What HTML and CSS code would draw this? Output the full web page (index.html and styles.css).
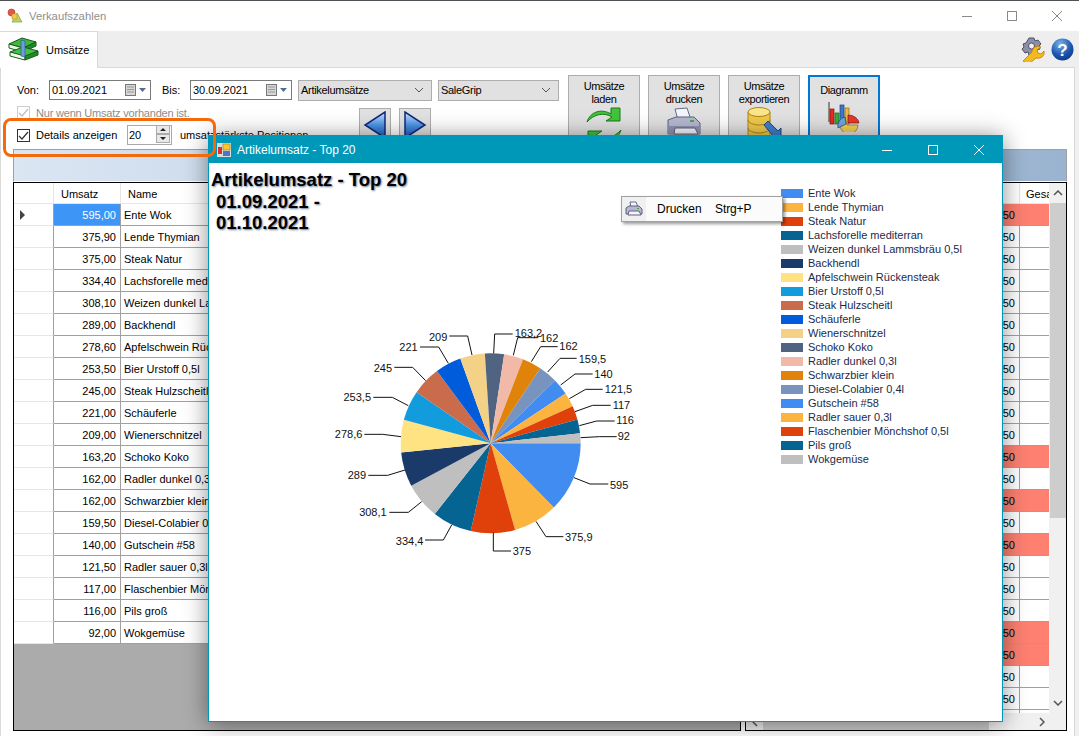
FILE: index.html
```html
<!DOCTYPE html>
<html lang="de">
<head>
<meta charset="utf-8">
<title>Verkaufszahlen</title>
<link rel="stylesheet" href="styles.css">
</head>
<body>
<div class="app">
  <header class="titlebar">
    <svg class="title-icon" width="16" height="16" viewBox="0 0 16 16"><circle cx="4.5" cy="4.5" r="3.5" fill="#e0584c" stroke="#a8352c" stroke-width=".6"/><path d="M10 5l5 9H5z" fill="#b6d86a" stroke="#7f9c3e" stroke-width=".7"/><rect x="5" y="6" width="5" height="5" fill="#f2c94f" stroke="#b99526" stroke-width=".6"/></svg>
    <span class="title-text">Verkaufszahlen</span>
    <div class="win-controls muted">
      <svg width="12" height="12" viewBox="0 0 12 12"><path d="M1 6.5h10" stroke="#8a8a8a"/></svg>
      <svg width="12" height="12" viewBox="0 0 12 12"><rect x="1.5" y="1.5" width="9" height="9" fill="none" stroke="#8a8a8a"/></svg>
      <svg width="12" height="12" viewBox="0 0 12 12"><path d="M1 1l10 10M11 1L1 11" stroke="#8a8a8a"/></svg>
    </div>
  </header>

  <nav class="tabstrip">
    <div class="tab">
      <svg class="tab-icon" width="32" height="25" viewBox="0 0 32 25"><path d="M1 8l13-6 14 4-13 6z" fill="#3fb83c" stroke="#14601a"/><path d="M1 8v4l14 4V12z" fill="#eef7ea" stroke="#14601a"/><path d="M15 12v4l13-6V6z" fill="#1f8a27" stroke="#14601a"/><path d="M2 16l13-5 15 4-13 6z" fill="#46c243" stroke="#14601a"/><path d="M2 16v4l15 4v-4z" fill="#f3f9ef" stroke="#14601a"/><path d="M17 20v4l13-5v-4z" fill="#1f8a27" stroke="#14601a"/><path d="M13 4l4 1v16l-4-1z" fill="#6f9bd8" stroke="#2c5aa0" stroke-width=".7"/></svg>
      <span>Umsätze</span>
    </div>
    <div class="tab-tools">
      <svg width="25" height="25" viewBox="0 0 25 25"><path d="M9 1h5l1 3 3-1 3 4-2 2 1 3-3 1-3 5H9l-1-3-3 1-3-4 2-2-1-3 3-1z" fill="#8d8ea8" stroke="#4f5068"/><circle cx="11.500" cy="9" r="3" fill="#f0f0f0" stroke="#4f5068"/><path d="M3 24l9-9c0-4 4-7 9-5l-4 3 1 3 3 1 3-3c1 5-3 8-8 7l-7 6z" fill="#f6b91c" stroke="#b77e08" stroke-width=".8"/></svg>
      <svg width="23" height="23" viewBox="0 0 23 23"><defs><radialGradient id="helpg" cx=".4" cy=".25" r=".9"><stop offset="0" stop-color="#7db0ea"/><stop offset=".55" stop-color="#1c56b0"/><stop offset="1" stop-color="#0c2f78"/></radialGradient></defs><circle cx="11.500" cy="11.500" r="11" fill="url(#helpg)"/><text class="help-mark" x="11.500" y="18">?</text></svg>
    </div>
  </nav>

  <main class="page">
    <section class="toolbar">
      <div class="filters">
        <div class="filter-row">
          <label class="lbl-von">Von:</label>
          <div class="datebox"><span>01.09.2021</span><svg width="26" height="14" viewBox="0 0 26 14"><rect x="1.500" y="1.500" width="10" height="11" fill="#d6d6d6" stroke="#777"/><path d="M3 4h7M3 6.500h7M3 9h7" stroke="#999"/><path d="M15 5h7l-3.500 4z" fill="#4f6d96"/></svg></div>
          <label class="lbl-bis">Bis:</label>
          <div class="datebox"><span>30.09.2021</span><svg width="26" height="14" viewBox="0 0 26 14"><rect x="1.500" y="1.500" width="10" height="11" fill="#d6d6d6" stroke="#777"/><path d="M3 4h7M3 6.500h7M3 9h7" stroke="#999"/><path d="M15 5h7l-3.500 4z" fill="#4f6d96"/></svg></div>
          <div class="combo combo-a"><span>Artikelumsätze</span><svg width="10" height="6" viewBox="0 0 10 6"><path d="M1 1l4 4 4-4" fill="none" stroke="#555"/></svg></div>
          <div class="combo combo-b"><span>SaleGrip</span><svg width="10" height="6" viewBox="0 0 10 6"><path d="M1 1l4 4 4-4" fill="none" stroke="#555"/></svg></div>
        </div>
        <div class="filter-lower">
          <div class="checks">
            <div class="check-row disabled">
              <span class="checkbox"><svg width="11" height="11" viewBox="0 0 11 11"><path d="M1 6l3 3 6-7" fill="none" stroke="#bdbdbd" stroke-width="1.200"/></svg></span>
              <span>Nur wenn Umsatz vorhanden ist.</span>
            </div>
            <div class="check-row details">
              <span class="checkbox on"><svg width="11" height="11" viewBox="0 0 11 11"><path d="M1 6l3 3 6-7" fill="none" stroke="#333" stroke-width="1.200"/></svg></span>
              <span class="details-label">Details anzeigen</span>
              <div class="spinner"><span class="spin-val">20</span><span class="spin-btns"><svg width="14" height="18" viewBox="0 0 14 18"><rect x=".5" y=".5" width="13" height="8" fill="#e8e8e8" stroke="#ababab"/><rect x=".5" y="9.500" width="13" height="8" fill="#e8e8e8" stroke="#ababab"/><path d="M4 6l3-3 3 3zM4 12h6l-3 3z" fill="#222"/></svg></span></div>
              <span class="details-after">umsatzstärkste Positionen</span>
            </div>
          </div>
          <div class="arrows">
            <button class="arrow-btn"><svg width="24" height="28" viewBox="0 0 24 28"><defs><linearGradient id="ag" x1="0" y1="0" x2="0" y2="1"><stop offset="0" stop-color="#cfe4fb"/><stop offset=".5" stop-color="#4c94e6"/><stop offset="1" stop-color="#1b57b4"/></linearGradient></defs><path d="M22 1v26L2 14z" fill="url(#ag)" stroke="#10277c" stroke-width="1.500"/></svg></button>
            <button class="arrow-btn"><svg width="24" height="28" viewBox="0 0 24 28"><path d="M2 1v26l20-13z" fill="url(#ag)" stroke="#10277c" stroke-width="1.500"/></svg></button>
          </div>
        </div>
      </div>
      <div class="actions">
        <button class="action"><span>Umsätze<br>laden</span>
          <svg width="40" height="42" viewBox="0 0 40 42"><path d="M3 16C6 6 17 2 27 8V2l9 0v13H22l6-4c-8-5-18-3-25 5z" fill="#43c43a" stroke="#197a18"/><path d="M37 24c-3 10-14 14-24 8v6H4V25h14l-6 4c8 5 18 3 25-5z" fill="#43c43a" stroke="#197a18"/></svg>
        </button>
        <button class="action"><span>Umsätze<br>drucken</span>
          <svg width="36" height="36" viewBox="0 0 36 36"><path d="M9 3l12-1 4 12H12z" fill="#f4f6fb" stroke="#666a86"/><path d="M2 14l8-3h18l6 6v11H2z" fill="#b5b8d0" stroke="#5e6182"/><path d="M2 20h32v8H2z" fill="#8f93b0"/><path d="M9 22h20l3 6H8z" fill="#f5f6fb" stroke="#5e6182"/><rect x="24" y="14" width="4" height="2" fill="#40b040"/></svg>
        </button>
        <button class="action"><span>Umsätze<br>exportieren</span>
          <svg width="36" height="36" viewBox="0 0 36 36"><path d="M2 6v22c0 3 6 5 11 5s11-2 11-5V6z" fill="#f0c84a" stroke="#a88518"/><ellipse cx="13" cy="6" rx="11" ry="4.500" fill="#fbe78a" stroke="#a88518"/><path d="M2 14c0 3 6 5 11 5s11-2 11-5M2 22c0 3 6 5 11 5s11-2 11-5" fill="none" stroke="#a88518"/><path d="M18 19l4-4 10 10 3-3v11H24l3-3z" fill="#3f7fcc" stroke="#1d4a8a"/></svg>
        </button>
        <button class="action active"><span class="single">Diagramm</span>
          <svg width="32" height="32" viewBox="0 0 32 32"><path d="M1 2v20" stroke="#333"/><rect x="2" y="9" width="4" height="15" fill="#e92b20" stroke="#7d1510" stroke-width=".7"/><rect x="7" y="13" width="4" height="11" fill="#3cab3a" stroke="#1a651a" stroke-width=".7"/><rect x="12" y="5" width="4" height="19" fill="#3b79cf" stroke="#1c417d" stroke-width=".7"/><rect x="17" y="8" width="4" height="16" fill="#efb93f" stroke="#8d6a12" stroke-width=".7"/><path d="M20 15a11 9 0 0 1 11 8h-11z" fill="#e8382c" stroke="#7d1510" stroke-width=".7"/><path d="M17 17a9 9 0 1 0 13 8H19z" fill="#f3cf55" stroke="#8d6a12" stroke-width=".7"/><path d="M17 17a9 9 0 0 0-7 11l8-4z" fill="#6fa5e0" stroke="#1c417d" stroke-width=".7"/></svg>
        </button>
      </div>
    </section>

    <div class="band"></div>

    <section class="grids">
      <div class="grid-left">
        <table class="tbl">
          <colgroup><col class="c-head"><col class="c-umsatz"><col></colgroup>
          <thead><tr><th></th><th class="th-u">Umsatz</th><th class="th-n">Name</th></tr></thead>
          <tbody>
            <tr><td class="rh"><i class="pointer"></i></td><td class="num sel">595,00</td><td>Ente Wok</td></tr>
            <tr><td class="rh"></td><td class="num">375,90</td><td>Lende Thymian</td></tr>
            <tr><td class="rh"></td><td class="num">375,00</td><td>Steak Natur</td></tr>
            <tr><td class="rh"></td><td class="num">334,40</td><td>Lachsforelle mediterran</td></tr>
            <tr><td class="rh"></td><td class="num">308,10</td><td>Weizen dunkel Lammsbräu 0,5l</td></tr>
            <tr><td class="rh"></td><td class="num">289,00</td><td>Backhendl</td></tr>
            <tr><td class="rh"></td><td class="num">278,60</td><td>Apfelschwein Rückensteak</td></tr>
            <tr><td class="rh"></td><td class="num">253,50</td><td>Bier Urstoff 0,5l</td></tr>
            <tr><td class="rh"></td><td class="num">245,00</td><td>Steak Hulzscheitl</td></tr>
            <tr><td class="rh"></td><td class="num">221,00</td><td>Schäuferle</td></tr>
            <tr><td class="rh"></td><td class="num">209,00</td><td>Wienerschnitzel</td></tr>
            <tr><td class="rh"></td><td class="num">163,20</td><td>Schoko Koko</td></tr>
            <tr><td class="rh"></td><td class="num">162,00</td><td>Radler dunkel 0,3l</td></tr>
            <tr><td class="rh"></td><td class="num">162,00</td><td>Schwarzbier klein</td></tr>
            <tr><td class="rh"></td><td class="num">159,50</td><td>Diesel-Colabier 0,4l</td></tr>
            <tr><td class="rh"></td><td class="num">140,00</td><td>Gutschein #58</td></tr>
            <tr><td class="rh"></td><td class="num">121,50</td><td>Radler sauer 0,3l</td></tr>
            <tr><td class="rh"></td><td class="num">117,00</td><td>Flaschenbier Mönchshof 0,5l</td></tr>
            <tr><td class="rh"></td><td class="num">116,00</td><td>Pils groß</td></tr>
            <tr><td class="rh"></td><td class="num">92,00</td><td>Wokgemüse</td></tr>
          </tbody>
        </table>
      </div>
      <div class="grid-right">
        <div class="right-top">
          <div class="right-cells">
            <table class="tbl tbl-right">
              <colgroup><col><col class="c-val"><col class="c-ges"></colgroup>
              <thead><tr><th></th><th></th><th class="th-ges"><span class="clip">Gesamt</span></th></tr></thead>
              <tbody>
                <tr class="red"><td></td><td class="num">0,50</td><td></td></tr>
                <tr><td></td><td class="num">0,50</td><td></td></tr>
                <tr><td></td><td class="num">0,50</td><td></td></tr>
                <tr><td></td><td class="num">0,50</td><td></td></tr>
                <tr><td></td><td class="num">0,50</td><td></td></tr>
                <tr><td></td><td class="num">0,50</td><td></td></tr>
                <tr><td></td><td class="num">0,50</td><td></td></tr>
                <tr><td></td><td class="num">0,50</td><td></td></tr>
                <tr><td></td><td class="num">0,50</td><td></td></tr>
                <tr><td></td><td class="num">0,50</td><td></td></tr>
                <tr><td></td><td class="num">0,50</td><td></td></tr>
                <tr class="red"><td></td><td class="num">0,50</td><td></td></tr>
                <tr><td></td><td class="num">0,50</td><td></td></tr>
                <tr class="red"><td></td><td class="num">0,50</td><td></td></tr>
                <tr><td></td><td class="num">0,50</td><td></td></tr>
                <tr class="red"><td></td><td class="num">0,50</td><td></td></tr>
                <tr><td></td><td class="num">0,50</td><td></td></tr>
                <tr><td></td><td class="num">0,50</td><td></td></tr>
                <tr><td></td><td class="num">0,50</td><td></td></tr>
                <tr class="red"><td></td><td class="num">0,50</td><td></td></tr>
                <tr class="red"><td></td><td class="num">0,50</td><td></td></tr>
                <tr><td></td><td class="num">0,50</td><td></td></tr>
                <tr><td></td><td class="num">0,50</td><td></td></tr>
                <tr><td></td><td></td><td></td></tr>
              </tbody>
            </table>
          </div>
          <div class="vscroll">
            <div class="sb-btn"><svg width="10" height="6" viewBox="0 0 10 6"><path d="M1 5l4-4 4 4" fill="none" stroke="#555" stroke-width="1.500"/></svg></div>
            <div class="v-thumb"></div>
            <div class="v-track"></div>
            <div class="sb-btn"><svg width="10" height="6" viewBox="0 0 10 6"><path d="M1 1l4 4 4-4" fill="none" stroke="#555" stroke-width="1.500"/></svg></div>
          </div>
        </div>
        <div class="hscroll">
          <svg width="6" height="10" viewBox="0 0 6 10"><path d="M5 1L1 5l4 4" fill="none" stroke="#555" stroke-width="1.500"/></svg>
          <div class="h-thumb"></div>
          <svg width="6" height="10" viewBox="0 0 6 10"><path d="M1 1l4 4-4 4" fill="none" stroke="#555" stroke-width="1.500"/></svg>
        </div>
      </div>
    </section>
  </main>

  <div class="annotation"></div>

  <article class="chart-win">
    <div class="chart-title">
      <svg width="14" height="14" viewBox="0 0 14 14"><rect width="14" height="14" fill="#dcdcdc"/><rect x="6" y="1" width="7" height="6" fill="#f6c72f" stroke="#a47f10" stroke-width=".6"/><rect x="1" y="4" width="4" height="7" fill="#d8352a"/><rect x="6" y="8" width="7" height="5" fill="#4877c8"/></svg>
      <span class="chart-name">Artikelumsatz - Top 20</span>
      <div class="win-controls light">
        <svg width="12" height="12" viewBox="0 0 12 12"><path d="M1 6.500h10" stroke="#fff"/></svg>
        <svg width="12" height="12" viewBox="0 0 12 12"><rect x="1.500" y="1.500" width="9" height="9" fill="none" stroke="#fff"/></svg>
        <svg width="12" height="12" viewBox="0 0 12 12"><path d="M1 1l10 10M11 1L1 11" stroke="#fff"/></svg>
      </div>
    </div>
    <div class="chart-body">
      <h1 class="chart-heading">Artikelumsatz - Top 20<span class="sub">01.09.2021 -<br>01.10.2021</span></h1>
      <svg class="pie" width="320" height="250" viewBox="0 0 960 750">
        <g class="slices">
          <circle class="s1" cx="512" cy="400" r="135" pathLength="4717.7" stroke-dasharray="595 4717.7" stroke-dashoffset="0"/>
          <circle class="s2" cx="512" cy="400" r="135" pathLength="4717.7" stroke-dasharray="375.9 4717.7" stroke-dashoffset="-595"/>
          <circle class="s3" cx="512" cy="400" r="135" pathLength="4717.7" stroke-dasharray="375 4717.7" stroke-dashoffset="-970.9"/>
          <circle class="s4" cx="512" cy="400" r="135" pathLength="4717.7" stroke-dasharray="334.4 4717.7" stroke-dashoffset="-1345.9"/>
          <circle class="s5" cx="512" cy="400" r="135" pathLength="4717.7" stroke-dasharray="308.1 4717.7" stroke-dashoffset="-1680.3"/>
          <circle class="s6" cx="512" cy="400" r="135" pathLength="4717.7" stroke-dasharray="289 4717.7" stroke-dashoffset="-1988.4"/>
          <circle class="s7" cx="512" cy="400" r="135" pathLength="4717.7" stroke-dasharray="278.6 4717.7" stroke-dashoffset="-2277.4"/>
          <circle class="s8" cx="512" cy="400" r="135" pathLength="4717.7" stroke-dasharray="253.5 4717.7" stroke-dashoffset="-2556"/>
          <circle class="s9" cx="512" cy="400" r="135" pathLength="4717.7" stroke-dasharray="245 4717.7" stroke-dashoffset="-2809.5"/>
          <circle class="s10" cx="512" cy="400" r="135" pathLength="4717.7" stroke-dasharray="221 4717.7" stroke-dashoffset="-3054.5"/>
          <circle class="s11" cx="512" cy="400" r="135" pathLength="4717.7" stroke-dasharray="209 4717.7" stroke-dashoffset="-3275.5"/>
          <circle class="s12" cx="512" cy="400" r="135" pathLength="4717.7" stroke-dasharray="163.2 4717.7" stroke-dashoffset="-3484.5"/>
          <circle class="s13" cx="512" cy="400" r="135" pathLength="4717.7" stroke-dasharray="162 4717.7" stroke-dashoffset="-3647.7"/>
          <circle class="s14" cx="512" cy="400" r="135" pathLength="4717.7" stroke-dasharray="162 4717.7" stroke-dashoffset="-3809.7"/>
          <circle class="s15" cx="512" cy="400" r="135" pathLength="4717.7" stroke-dasharray="159.5 4717.7" stroke-dashoffset="-3971.7"/>
          <circle class="s1" cx="512" cy="400" r="135" pathLength="4717.7" stroke-dasharray="140 4717.7" stroke-dashoffset="-4131.2"/>
          <circle class="s2" cx="512" cy="400" r="135" pathLength="4717.7" stroke-dasharray="121.5 4717.7" stroke-dashoffset="-4271.2"/>
          <circle class="s3" cx="512" cy="400" r="135" pathLength="4717.7" stroke-dasharray="117 4717.7" stroke-dashoffset="-4392.7"/>
          <circle class="s4" cx="512" cy="400" r="135" pathLength="4717.7" stroke-dasharray="116 4717.7" stroke-dashoffset="-4509.7"/>
          <circle class="s5" cx="512" cy="400" r="135" pathLength="4717.7" stroke-dasharray="92 4717.7" stroke-dashoffset="-4625.7"/>
        </g>
        <g class="leaders">
          <polyline points="762,503 810,522 865,522"/>
          <polyline points="648,634 678,680 730,680"/>
          <polyline points="520,668 520,723 573,723"/>
          <polyline points="395,645 370,690 315,690"/>
          <polyline points="305,575 265,607 208,607"/>
          <polyline points="255,480 203,496 145,496"/>
          <polyline points="243,380 188,373 133,373"/>
          <polyline points="265,287 217,262 160,262"/>
          <polyline points="317,212 278,172 223,172"/>
          <polyline points="385,160 356,111 300,111"/>
          <polyline points="456,135 443,78 388,78"/>
          <polyline points="521,130 524,72 578,72"/>
          <polyline points="580,136 593,83 655,83"/>
          <polyline points="634,155 662,110 713,110"/>
          <polyline points="683,186 720,145 770,145"/>
          <polyline points="722,225 765,192 818,192"/>
          <polyline points="748,266 797,238 848,238"/>
          <polyline points="765,305 818,286 872,286"/>
          <polyline points="778,347 830,333 884,333"/>
          <polyline points="782,383 838,380 890,380"/>
        </g>
        <g class="labels">
          <text x="870" y="524">595</text>
          <text x="735" y="680">375,9</text>
          <text x="578" y="723">375</text>
          <text class="end" x="310" y="692">334,4</text>
          <text class="end" x="200" y="607">308,1</text>
          <text class="end" x="138" y="494">289</text>
          <text class="end" x="127" y="372">278,6</text>
          <text class="end" x="153" y="261">253,5</text>
          <text class="end" x="216" y="173">245</text>
          <text class="end" x="293" y="111">221</text>
          <text class="end" x="382" y="80">209</text>
          <text x="584" y="70">163,2</text>
          <text x="660" y="83">162</text>
          <text x="718" y="107">162</text>
          <text x="776" y="146">159,5</text>
          <text x="823" y="191">140</text>
          <text x="854" y="236">121,5</text>
          <text x="878" y="284">117</text>
          <text x="889" y="331">116</text>
          <text x="893" y="377">92</text>
        </g>
      </svg>
      <ul class="legend">
        <li><i class="k1"></i>Ente Wok</li>
        <li><i class="k2"></i>Lende Thymian</li>
        <li><i class="k3"></i>Steak Natur</li>
        <li><i class="k4"></i>Lachsforelle mediterran</li>
        <li><i class="k5"></i>Weizen dunkel Lammsbräu 0,5l</li>
        <li><i class="k6"></i>Backhendl</li>
        <li><i class="k7"></i>Apfelschwein Rückensteak</li>
        <li><i class="k8"></i>Bier Urstoff 0,5l</li>
        <li><i class="k9"></i>Steak Hulzscheitl</li>
        <li><i class="k10"></i>Schäuferle</li>
        <li><i class="k11"></i>Wienerschnitzel</li>
        <li><i class="k12"></i>Schoko Koko</li>
        <li><i class="k13"></i>Radler dunkel 0,3l</li>
        <li><i class="k14"></i>Schwarzbier klein</li>
        <li><i class="k15"></i>Diesel-Colabier 0,4l</li>
        <li><i class="k1"></i>Gutschein #58</li>
        <li><i class="k2"></i>Radler sauer 0,3l</li>
        <li><i class="k3"></i>Flaschenbier Mönchshof 0,5l</li>
        <li><i class="k4"></i>Pils groß</li>
        <li><i class="k5"></i>Wokgemüse</li>
      </ul>
      <div class="ctx-menu">
        <span class="ctx-icon"><svg width="18" height="16" viewBox="0 0 18 16"><path d="M5 1l6 0 2 5H6z" fill="#f4f6fb" stroke="#666a86"/><path d="M1 7l3-2h10l3 3v5H1z" fill="#b5b8d0" stroke="#5e6182"/><path d="M4 10h10l2 4H3z" fill="#f5f6fb" stroke="#5e6182"/><rect x="12" y="7" width="2" height="1" fill="#40b040"/></svg></span>
        <span class="ctx-label">Drucken</span>
        <span class="ctx-key">Strg+P</span>
      </div>
    </div>
  </article>
</div>
</body>
</html>
```
FILE: styles.css
```css
* { box-sizing: border-box; }
html, body { margin: 0; padding: 0; }
body { font-family: "Liberation Sans", Arial, sans-serif; font-size: 11px; color: #000; background: #f0f0f0; }
.app { position: relative; width: 1079px; height: 736px; overflow: hidden; display: flex; flex-direction: column; background: #f0f0f0; }

.titlebar { height: 31px; flex: none; background: #fff; border-top: 1px solid #4d5257; display: flex; align-items: center; padding-left: 7px; }
.title-icon { margin-right: 6px; }
.title-text { color: #8f8f8f; font-size: 11.300px; }
.win-controls { margin-left: auto; display: flex; }
.win-controls.muted { gap: 33px; padding-right: 16px; }
.win-controls.light { gap: 34px; padding-right: 17px; }

.tabstrip { height: 37px; flex: none; display: flex; background: #eeeeee; }
.tab { width: 98px; height: 37px; background: #fff; border: 1px solid #d9d9d9; border-bottom: 0; border-left: 0; display: flex; align-items: center; gap: 6px; padding-left: 8px; position: relative; z-index: 1; }
.tab-icon { margin-top: -3px; }
.tab-tools { margin-left: auto; display: flex; align-items: center; gap: 6px; padding-right: 5px; }
.help-mark { font: bold 17px "Liberation Sans", sans-serif; fill: #fff; text-anchor: middle; }

.page { flex: 1; margin: -1px 4px 0 0; background: #fff; border: 1px solid #d9d9d9; border-bottom: 0; display: flex; flex-direction: column; padding: 0 7px 0 12px; min-height: 0; }

.toolbar { height: 81px; flex: none; display: flex; position: relative; }
.filters { width: 555px; padding-top: 12px; flex: none; }
.filter-row { display: flex; align-items: center; height: 20px; padding-left: 4px; }
.lbl-von { width: 32px; }
.lbl-bis { width: 28px; margin-left: 11px; }
.datebox { width: 102px; height: 20px; border: 1px solid #7a7a7a; display: flex; align-items: center; justify-content: space-between; padding-left: 2px; background: #fff; }
.combo { height: 21px; background: #e1e1e1; border: 1px solid #adadad; display: flex; align-items: center; justify-content: space-between; padding: 0 7px 0 2px; letter-spacing: -.3px; }
.combo-a { width: 134px; margin-left: 6px; }
.combo-b { width: 121px; margin-left: 6px; }

.filter-lower { display: flex; }
.checks { width: 346px; }
.check-row { display: flex; align-items: center; height: 13px; margin-left: 4px; }
.check-row.disabled { margin-top: 6px; color: #8c8c8c; letter-spacing: -.2px; }
.check-row.details { height: 20px; margin-top: 6px; }
.checkbox { width: 13px; height: 13px; border: 1px solid #333; display: flex; align-items: center; justify-content: center; margin-right: 6px; flex: none; background: #fff; }
.disabled .checkbox { border-color: #cfcfcf; }
.details-label { width: 91px; }
.spinner { width: 45px; height: 20px; border: 1px solid #aaa; display: flex; align-items: center; justify-content: space-between; padding-left: 1px; padding-right: 1px; flex: none; }
.details-after { margin-left: 8px; white-space: nowrap; }
.arrows { display: flex; gap: 8px; margin-top: 8px; }
.arrow-btn { width: 32px; height: 34px; padding: 0; background: #e1e1e1; border: 1px solid #adadad; display: flex; align-items: center; justify-content: center; }

.actions { display: flex; gap: 8px; padding-top: 7px; }
.action { width: 72px; height: 76px; padding: 4px 0 0; background: #e1e1e1; border: 1px solid #adadad; font: 11px/13px "Liberation Sans", sans-serif; letter-spacing: -.4px; color: #000; display: flex; flex-direction: column; align-items: center; }
.action.active { border: 2px solid #0078d7; padding-top: 5px; }
.action .single { padding-top: 2px; margin-bottom: 3px; }

.band { height: 33px; flex: none; border: 1px solid #a0a0a0; border-bottom-color: #fff; background: linear-gradient(90deg, #dbe6f3, #9ab3d0); margin-top: 0; }

.grids { flex: none; height: 549px; display: flex; gap: 4px; }
.grid-left { width: 728px; flex: none; height: 549px; background: #ababab; border: 1px solid #000; overflow: hidden; }
.grid-right { flex: 1; height: 549px; border: 1px solid #000; background: #f0f0f0; display: flex; flex-direction: column; overflow: hidden; }

.tbl { border-collapse: separate; border-spacing: 0; table-layout: fixed; width: 100%; background: #fff; }
.c-head { width: 40px; }
.c-umsatz { width: 67px; }
.tbl th { height: 21px; padding: 2px 0 0; font-weight: normal; text-align: left; border-right: 1px solid #e6e6e6; border-bottom: 1px solid #e6e6e6; background: #fff; overflow: hidden; }
.th-u { padding-left: 7px !important; }
.th-n { padding-left: 7px !important; }
.tbl td { height: 22px; padding: 1px 0 0 3px; border-right: 1px solid #a0a0a0; border-bottom: 1px solid #a0a0a0; white-space: nowrap; overflow: hidden; }
.tbl td.rh { border-right-color: #a0a0a0; border-bottom-color: #e6e6e6; padding: 0; }
.tbl td.num { text-align: right; padding: 1px 4px 0 0; }
.tbl td.sel { background: #3d95f5; color: #fff; }
.pointer { display: block; width: 0; height: 0; margin-left: 6px; border-left: 5px solid #444; border-top: 5px solid transparent; border-bottom: 5px solid transparent; }

.right-top { flex: 1; display: flex; min-height: 0; }
.right-cells { flex: 1; overflow: hidden; }
.c-val { width: 70px; }
.c-ges { width: 29px; }
.tbl-right td:first-child { border-right: 0; }
.tbl-right td:last-child { border-right: 0; }
.tbl-right .red td { background: #fd8071; }
.th-ges { padding-left: 6px !important; border-right: 0 !important; }
.clip { display: block; width: 23px; overflow: hidden; white-space: nowrap; }
.vscroll { width: 16px; flex: none; margin-left: 1px; display: flex; flex-direction: column; background: #f0f0f0; }
.sb-btn { height: 20px; flex: none; display: flex; align-items: center; justify-content: center; }
.v-thumb { height: 315px; flex: none; background: #cdcdcd; }
.v-track { flex: 1; }
.hscroll { height: 17px; flex: none; padding: 0 21px 0 6px; display: flex; align-items: center; justify-content: space-between; background: #f0f0f0; }
.h-thumb { flex: 1; height: 17px; margin: 0 50px 0 5px; background: #cdcdcd; }

.annotation { position: absolute; left: 3px; top: 118px; width: 213px; height: 39px; border: 3px solid #f46a0b; border-radius: 8px; z-index: 3; pointer-events: none; }

.chart-win { position: absolute; left: 208px; top: 135px; width: 795px; height: 587px; background: #fff; border: 1px solid #0098b9; box-shadow: 0 2px 22px rgba(0, 0, 0, .45); z-index: 2; display: flex; flex-direction: column; }
.chart-title { height: 27px; flex: none; background: #0098b9; color: #fff; display: flex; align-items: center; padding-left: 8px; font-size: 12px; }
.chart-name { margin-left: 6px; }
.chart-body { flex: 1; position: relative; display: grid; grid-template-columns: 111px 320px 141px 1fr; grid-template-rows: 1fr; }
.chart-heading { grid-column: 1 / 3; grid-row: 1; margin: 6px 0 0 2px; font: bold 18.500px/21.500px "Liberation Sans", sans-serif; text-shadow: 1px 1px 2px rgba(40, 70, 110, .7); white-space: nowrap; }
.sub { display: block; padding-left: 5px; }
.pie { grid-column: 2; grid-row: 1; margin-top: 147px; overflow: visible; }
.slices circle { fill: none; stroke-width: 270; }
.s1 { stroke: #418cf0; } .s2 { stroke: #fcb441; } .s3 { stroke: #e0400a; } .s4 { stroke: #056492; } .s5 { stroke: #bfbfbf; }
.s6 { stroke: #1a3b69; } .s7 { stroke: #ffe382; } .s8 { stroke: #129cdd; } .s9 { stroke: #ca6b4b; } .s10 { stroke: #005cdb; }
.s11 { stroke: #f3d288; } .s12 { stroke: #506381; } .s13 { stroke: #f1b9a8; } .s14 { stroke: #e0830a; } .s15 { stroke: #7893be; }
.leaders polyline { fill: none; stroke: #111; stroke-width: 3; }
.labels text { font: 33px "Liberation Sans", sans-serif; dominant-baseline: central; fill: #111; }
.labels .end { text-anchor: end; }
.legend { grid-column: 4; grid-row: 1; list-style: none; margin: 23px 0 0; padding: 0; }
.legend li { height: 14px; line-height: 14px; display: flex; align-items: center; color: #1d2a4a; white-space: nowrap; }
.legend i { width: 22px; height: 9px; margin-right: 5px; flex: none; }
.k1 { background: #418cf0; } .k2 { background: #fcb441; } .k3 { background: #e0400a; } .k4 { background: #056492; } .k5 { background: #bfbfbf; }
.k6 { background: #1a3b69; } .k7 { background: #ffe382; } .k8 { background: #129cdd; } .k9 { background: #ca6b4b; } .k10 { background: #005cdb; }
.k11 { background: #f3d288; } .k12 { background: #506381; } .k13 { background: #f1b9a8; } .k14 { background: #e0830a; } .k15 { background: #7893be; }
.ctx-menu { position: absolute; left: 412px; top: 33px; width: 162px; height: 26px; background: #fbfbfb; border: 1px solid #a0a0a0; box-shadow: 2px 2px 3px rgba(0, 0, 0, .4); display: flex; align-items: center; font-size: 12px; }
.ctx-icon { width: 24px; height: 24px; background: #f0f0f0; display: flex; align-items: center; justify-content: center; flex: none; }
.ctx-label { margin-left: 11px; width: 58px; }
.ctx-key { letter-spacing: -.1px; }
```
